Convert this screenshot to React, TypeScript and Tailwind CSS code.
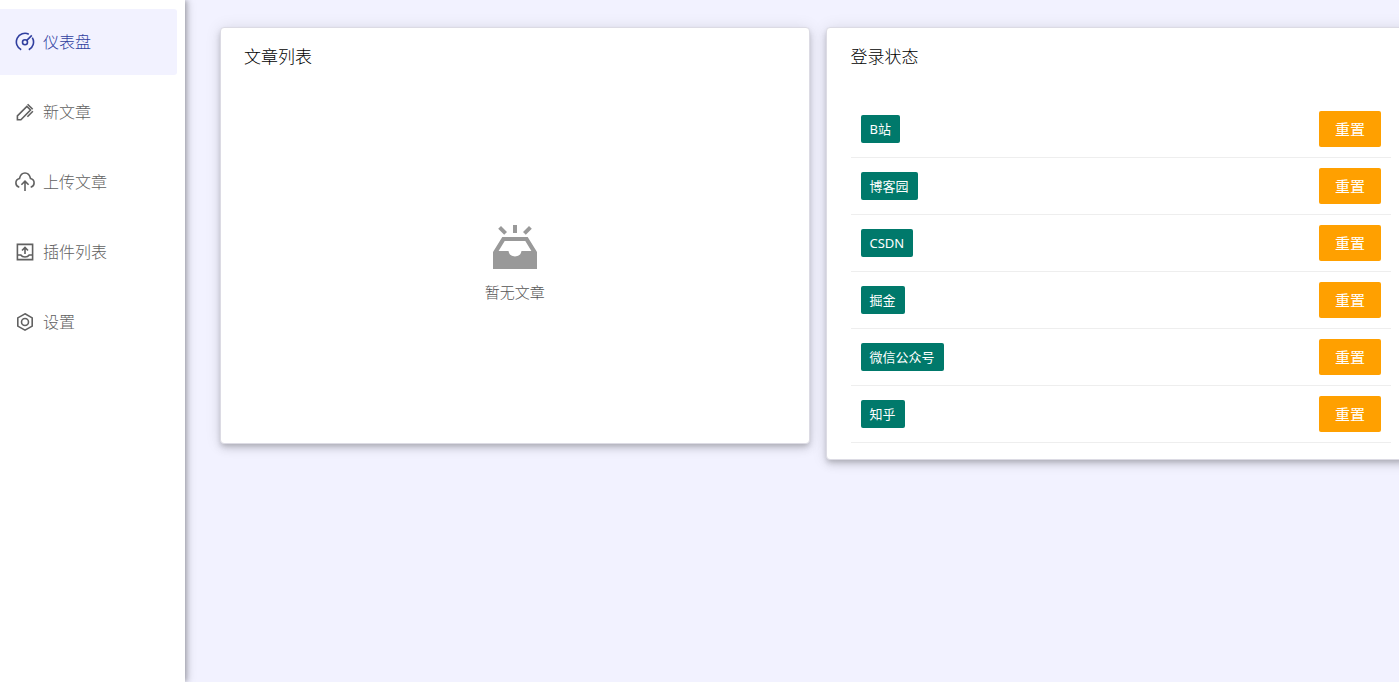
import React from "react";

type IconProps = { className?: string };

function LineIcon({ className, children }: IconProps & { children: React.ReactNode }) {
  return (
    <svg viewBox="0 0 20 20" fill="none" stroke="currentColor" strokeWidth="1.6" className={className} aria-hidden="true">
      {children}
    </svg>
  );
}

function GaugeIcon({ className }: IconProps) {
  return (
    <LineIcon className={className}>
      <path d="M6.2 17.7A8.6 8.6 0 0 1 13.8 2.2M17.3 5.6A8.6 8.6 0 0 1 13.8 17.7" />
      <circle cx="10" cy="10.2" r="2.5" />
      <path d="M11.8 8.4L16.8 3.4" />
    </LineIcon>
  );
}

function PencilIcon({ className }: IconProps) {
  return (
    <LineIcon className={className}>
      <path d="M2.4 17.7V13.9L11.9 4.4L15.5 8L5.9 17.7Z" />
      <path d="M12.6 2.2L17.7 7.3" />
      <path d="M17.9 9.2L12.4 14.7" />
    </LineIcon>
  );
}

function CloudUploadIcon({ className }: IconProps) {
  return (
    <LineIcon className={className}>
      <path d="M4.3 15.2C2.2 14.6 0.9 13 0.9 11C0.9 8.6 2.5 6.9 4.5 6.5C5.2 3.3 7.3 1 10 1C12.7 1 14.8 3.3 15.5 6.5C17.5 6.9 19.1 8.6 19.1 11C19.1 13 17.8 14.6 15.7 15.2" />
      <path d="M10 19V9M6.4 12.8L10 9.2L13.6 12.8" />
    </LineIcon>
  );
}

function InboxUploadIcon({ className }: IconProps) {
  return (
    <LineIcon className={className}>
      <path d="M2.4 2.4H17.6V17.6H2.4Z" />
      <path d="M2.4 13H5.8C7.4 15.7 12.6 15.7 14.2 13H17.6" />
      <path d="M10 12V5.4M7 8.5L10 5.5L13 8.5" />
    </LineIcon>
  );
}

function HexSettingsIcon({ className }: IconProps) {
  return (
    <LineIcon className={className}>
      <path d="M10 1.8L17.2 5.9V14.1L10 18.2L2.8 14.1V5.9Z" />
      <circle cx="10" cy="10" r="3.5" />
    </LineIcon>
  );
}

function EmptyInboxIcon({ className }: IconProps) {
  return (
    <svg viewBox="0 0 44 44" fill="currentColor" className={className} aria-hidden="true">
      <path fillRule="evenodd" d="M9.3 12H34.7L44 27V44H0V27ZM11.7 16L5.6 26H15.5A6.6 6.6 0 0 0 28.5 26H38.4L32.3 16Z" />
      <path d="M20 0H24V8H20Z" />
      <path d="M8 1L14 7L11.2 9.8L5.2 3.8ZM36 1L38.8 3.8L32.8 9.8L30 7Z" />
    </svg>
  );
}

const menu = [
  { label: "仪表盘", Icon: GaugeIcon, active: true },
  { label: "新文章", Icon: PencilIcon, active: false },
  { label: "上传文章", Icon: CloudUploadIcon, active: false },
  { label: "插件列表", Icon: InboxUploadIcon, active: false },
  { label: "设置", Icon: HexSettingsIcon, active: false },
];

const platforms = ["B站", "博客园", "CSDN", "掘金", "微信公众号", "知乎"];

const cardClass =
  "rounded-[4px] border border-[#dcdbe4] bg-white shadow-[0_3px_5px_-1px_rgba(0,0,0,0.16),0_5px_8px_0_rgba(0,0,0,0.1),0_1px_16px_0_rgba(0,0,0,0.1)]";

export default function App() {
  return (
    <div className="flex min-h-screen overflow-hidden bg-[#f2f2ff] font-['Noto_Sans','Noto_Sans_CJK_SC',sans-serif]">
      <aside className="w-[185px] shrink-0 bg-white pt-[9px] pr-2 shadow-[2px_0_4px_-1px_rgba(0,0,0,0.2),4px_0_5px_0_rgba(0,0,0,0.1),1px_0_12px_0_rgba(0,0,0,0.12)]">
        <nav className="flex flex-col gap-1">
          {menu.map(({ label, Icon, active }) => (
            <a
              key={label}
              href="#"
              aria-current={active ? "page" : undefined}
              className={
                active
                  ? "flex h-[66px] items-center gap-2 rounded-r-[3px] bg-[#f2f2ff] pl-[15px] text-[16px] font-light text-[#303f9f]"
                  : "flex h-[66px] items-center gap-2 pl-[15px] text-[16px] font-light text-[#616161]"
              }
            >
              <Icon className="size-5" />
              <span>{label}</span>
            </a>
          ))}
        </nav>
      </aside>
      <main className="-mr-4 grid min-w-0 flex-1 grid-cols-2 items-start gap-4 pt-[27px] pl-[35px]">
        <section className={cardClass}>
          <h2 className="px-[23px] pt-[15px] text-[17px] leading-7 font-light text-black">文章列表</h2>
          <div className="flex h-[372px] flex-col items-center pt-[154px] text-[#999999]">
            <EmptyInboxIcon className="size-11" />
            <p className="mt-[11px] text-[15px] leading-6 font-light text-[#555555]">暂无文章</p>
          </div>
        </section>
        <section className={cardClass}>
          <h2 className="px-6 pt-[15px] text-[17px] leading-7 font-light text-black">登录状态</h2>
          <div className="pt-[30px] pr-[23px] pb-4 pl-6">
            <table className="w-full">
              <tbody>
                {platforms.map((name) => (
                  <tr key={name} className="border-b border-[#eeeeee]">
                    <td className="p-[10px]">
                      <span className="flex h-7 w-fit items-center rounded-[2px] bg-[#00796b] px-[9px] text-[13px] leading-5 text-white">
                        {name}
                      </span>
                    </td>
                    <td className="p-[10px]">
                      <button
                        type="button"
                        aria-label={`重置 ${name}`}
                        className="ml-auto flex h-9 w-[62px] items-center justify-center rounded-[2px] bg-[#ffa000] text-[15px] text-white"
                      >
                        重置
                      </button>
                    </td>
                  </tr>
                ))}
              </tbody>
            </table>
          </div>
        </section>
      </main>
    </div>
  );
}
